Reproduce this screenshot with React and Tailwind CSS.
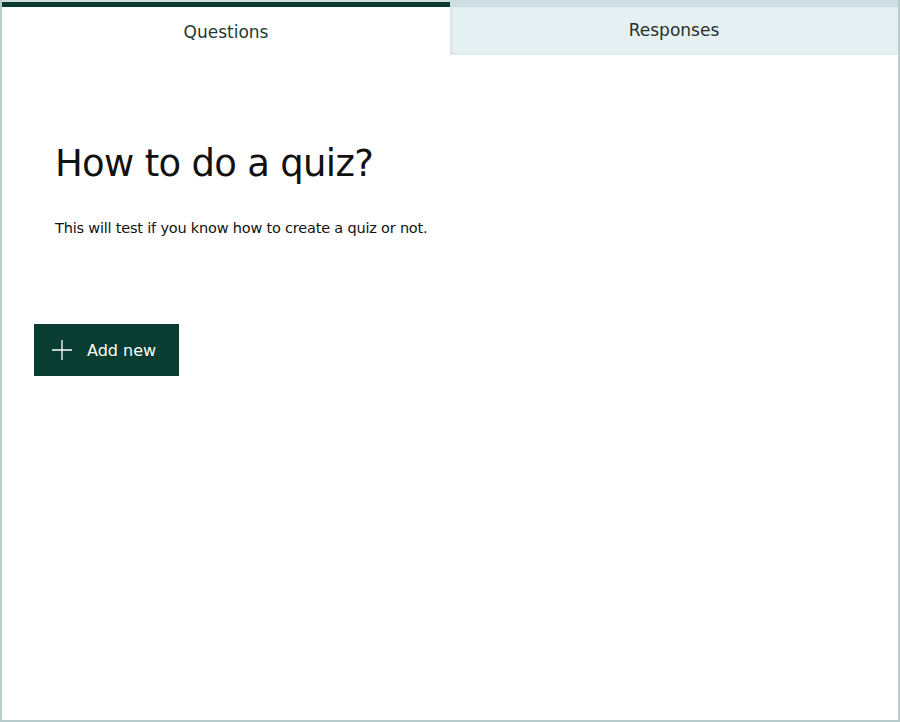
import React, { useState } from "react";

function Tabs({ active, setActive }) {
  const tabs = ["Questions", "Responses"];
  return (
    <div className="flex h-[55px] bg-[#cddde2]">
      {tabs.map((t) => {
        const on = t === active;
        return (
          <button
            key={t}
            onClick={() => setActive(t)}
            className={
              on
                ? "flex-1 flex items-center justify-center bg-white border-t-[5px] border-[#0b3b2f] mt-[2px] text-[17px] text-[#1b3a33]"
                : "flex-1 flex items-center justify-center bg-[#e4f0f1] mt-[7px] text-[17px] text-[#26302e] shadow-[inset_2px_0_3px_rgba(0,0,0,0.06)]"
            }
            style={{ fontFamily: "Tahoma, 'DejaVu Sans', sans-serif" }}
          >
            <span className={on ? "mt-[3px]" : "mt-[0px]"}>{t}</span>
          </button>
        );
      })}
    </div>
  );
}

export default function App() {
  const [active, setActive] = useState("Questions");
  return (
    <div
      className="w-[900px] h-[722px] bg-white border-x-2 border-b-2 border-[#b9cbcb] flex flex-col"
      style={{ fontFamily: "Tahoma, 'DejaVu Sans', sans-serif" }}
    >
      <Tabs active={active} setActive={setActive} />
      <div className="flex-1 bg-white">
        <div className="pl-[53px] pt-[85px]">
          <h1 className="text-[37px] leading-[48px] text-[#111] tracking-[-0.7px]">
            How to do a quiz?
          </h1>
          <p className="mt-[30px] text-[14.5px] text-[#111] tracking-[-0.2px]">
            This will test if you know how to create a quiz or not.
          </p>
        </div>
        <div className="pl-[32px] mt-[84px]">
          <button className="flex items-center h-[52px] w-[145px] bg-[#0a3d31] text-white text-[16px] pl-[17px]">
            <svg width="22" height="22" viewBox="0 0 22 22" className="mr-[14px]">
              <path d="M11 1v20M1 11h20" stroke="white" strokeWidth="1.3" fill="none" />
            </svg>
            <span className="mt-[2px]">Add new</span>
          </button>
        </div>
      </div>
    </div>
  );
}
